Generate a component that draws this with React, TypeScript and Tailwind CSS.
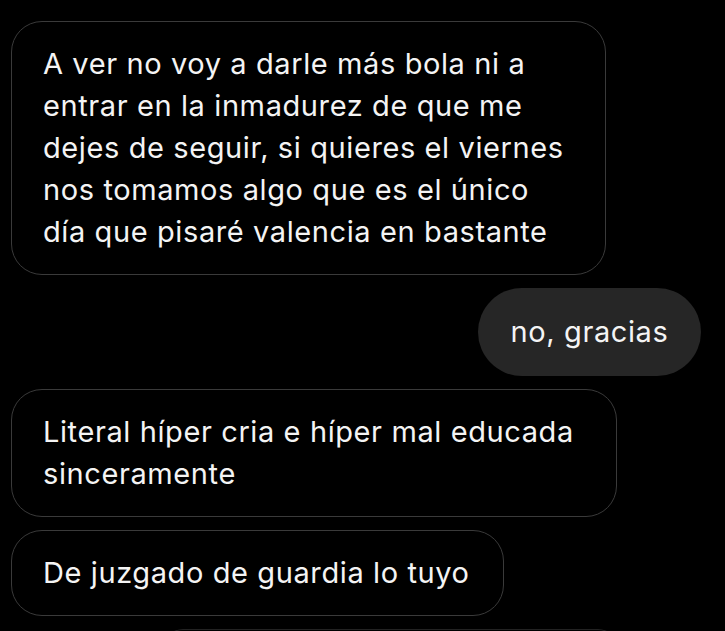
import React from "react";

const font = { fontFamily: "Inter, 'Noto Sans', sans-serif" };

function Received({ lines, width }: { lines: string[]; width: string }) {
  return (
    <div
      className={`${width} rounded-[31px] border border-[#3a3a3a] bg-black px-[31px] py-[21px] text-[29px] leading-[42px] text-[#f4f4f4] whitespace-nowrap tracking-[0.6px]`}
    >
      {lines.map((l, i) => (
        <div key={i}>{l}</div>
      ))}
    </div>
  );
}

export default function App() {
  return (
    <div className="h-[631px] w-[725px] overflow-hidden bg-black" style={font}>
      <div className="flex flex-col gap-[13px] px-[11px] pt-[21px]">
        <Received
          width="w-[595px]"
          lines={[
            "A ver no voy a darle más bola ni a",
            "entrar en la inmadurez de que me",
            "dejes de seguir, si quieres el viernes",
            "nos tomamos algo que es el único",
            "día que pisaré valencia en bastante",
          ]}
        />
        <div className="flex justify-end pr-[13px]">
          <div className="flex h-[88px] w-[223px] items-center justify-center rounded-full bg-[#262626] text-[29px] leading-[42px] text-[#f4f4f4] tracking-[0.6px]">
            no, gracias
          </div>
        </div>
        <Received
          width="w-[606px]"
          lines={["Literal híper cria e híper mal educada", "sinceramente"]}
        />
        <Received width="w-[493px]" lines={["De juzgado de guardia lo tuyo"]} />
        <div className="ml-[152px] h-[20px] w-[455px] rounded-t-[31px] border-t border-[#222222]" />
      </div>
    </div>
  );
}
